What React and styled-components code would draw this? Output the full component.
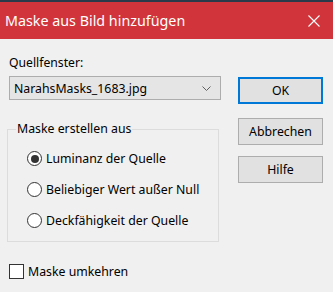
import React from "react";
import styled, { createGlobalStyle } from "styled-components";

const Global = createGlobalStyle`
  html, body { margin: 0; padding: 0; background: #f0f0f0; }
  body { font-family: "Noto Sans", "Open Sans", "Liberation Sans", sans-serif; color: #000; }
  * { box-sizing: border-box; }
`;

const Window = styled.div`
  width: 333px;
  height: 292px;
  background: #f0f0f0;
  overflow: hidden;
  display: flex;
  flex-direction: column;
`;

const TopStrip = styled.div`
  height: 2px;
  background: #2b3a4b;
`;

const TitleBar = styled.div`
  height: 37px;
  background: #d1343a;
  color: #fff;
  display: flex;
  align-items: center;
  justify-content: space-between;
  padding: 0 13px 0 5px;
  font-size: 14.3px;
`;

const Close = styled.svg`
  width: 12px;
  height: 12px;
  display: block;
`;

const Body = styled.div`
  display: flex;
  flex: 1;
`;

const LeftCol = styled.div`
  width: 238px;
  flex-shrink: 0;
  padding-left: 7px;
  display: flex;
  flex-direction: column;
`;

const Label = styled.div`
  margin: 15px 0 0 2px;
  font-size: 12.2px;
  line-height: 17px;
`;

const Combo = styled.div`
  margin: 5px 0 0 2px;
  width: 212px;
  height: 24px;
  border: 1px solid #adadad;
  background: #e5e5e5;
  display: flex;
  align-items: center;
  justify-content: space-between;
  padding: 0 9px 0 4px;
  font-size: 12.3px;
`;

const Group = styled.div`
  position: relative;
  margin-top: 29px;
  width: 212px;
  height: 113px;
  border: 1px solid #dcdcdc;
  padding: 13px 0 0 19px;
  display: flex;
  flex-direction: column;
`;

const Legend = styled.span`
  position: absolute;
  top: -10px;
  left: 8px;
  padding: 0 1px;
  background: #f0f0f0;
  font-size: 12.3px;
  line-height: 18px;
`;

const RadioRow = styled.label`
  height: 31px;
  display: flex;
  align-items: center;
  gap: 4px;
  font-size: 12.3px;
`;

const RadioCircle = styled.span`
  width: 15px;
  height: 15px;
  border-radius: 50%;
  border: 1px solid #333;
  background: #fff;
  display: flex;
  align-items: center;
  justify-content: center;
  &::after {
    content: "";
    width: 8px;
    height: 8px;
    border-radius: 50%;
    background: ${p => (p.$checked ? "#333" : "transparent")};
  }
`;

const CheckRow = styled.label`
  margin: 21px 0 0 2px;
  display: flex;
  align-items: center;
  gap: 4px;
  font-size: 12.3px;
`;

const CheckBox = styled.span`
  width: 15px;
  height: 15px;
  border: 1px solid #333;
  background: #fff;
`;

const RightCol = styled.div`
  display: flex;
  flex-direction: column;
  padding-top: 38px;
`;

const Button = styled.div`
  width: 85px;
  height: 27px;
  margin-top: ${p => p.$mt || 0}px;
  background: #e1e1e1;
  border: ${p => (p.$primary ? "2px solid #0078d7" : "1px solid #adadad")};
  display: flex;
  align-items: center;
  justify-content: center;
  font-size: 12.3px;
`;

export default function App() {
  return (
    <>
      <Global />
      <Window>
        <TopStrip />
        <TitleBar>
          <span>Maske aus Bild hinzufügen</span>
          <Close viewBox="0 0 12 12">
            <path d="M0.5 0.5 L11.5 11.5 M11.5 0.5 L0.5 11.5" stroke="#fff" strokeWidth="1.1" fill="none" />
          </Close>
        </TitleBar>
        <Body>
          <LeftCol>
            <Label>Quellfenster:</Label>
            <Combo>
              <span>NarahsMasks_1683.jpg</span>
              <svg width="9" height="5" viewBox="0 0 9 5">
                <path d="M0.5 0.5 L4.5 4.5 L8.5 0.5" stroke="#606060" strokeWidth="1" fill="none" />
              </svg>
            </Combo>
            <Group>
              <Legend>Maske erstellen aus</Legend>
              <RadioRow>
                <RadioCircle $checked />
                <span>Luminanz der Quelle</span>
              </RadioRow>
              <RadioRow>
                <RadioCircle />
                <span>Beliebiger Wert außer Null</span>
              </RadioRow>
              <RadioRow>
                <RadioCircle />
                <span>Deckfähigkeit der Quelle</span>
              </RadioRow>
            </Group>
            <CheckRow>
              <CheckBox />
              <span>Maske umkehren</span>
            </CheckRow>
          </LeftCol>
          <RightCol>
            <Button $primary>OK</Button>
            <Button $mt={14}>Abbrechen</Button>
            <Button $mt={11}>Hilfe</Button>
          </RightCol>
        </Body>
      </Window>
    </>
  );
}
